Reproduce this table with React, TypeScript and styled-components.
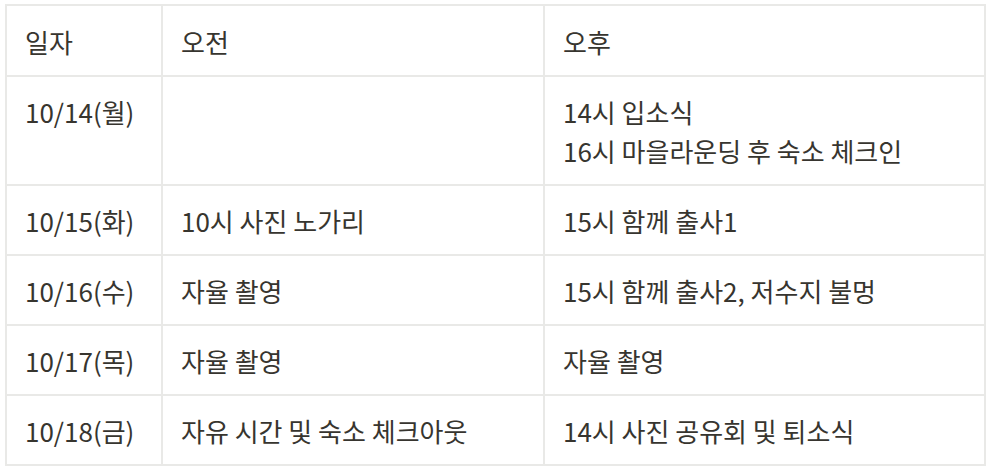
import React from 'react';
import styled, { createGlobalStyle } from 'styled-components';

const GlobalStyle = createGlobalStyle`
    html, body {
        margin: 0;
        padding: 0;
        background: #ffffff;
    }
`;

const PageWrapper = styled.div`
    padding: 4px 0 0 5px;
    font-family: 'Noto Sans CJK KR', 'Noto Sans', sans-serif;
    color: #37352f;
`;

const ScheduleTable = styled.table`
    width: 981px;
    table-layout: fixed;
    border-collapse: collapse;
    font-size: 26px;
    line-height: 39px;
`;

const Cell = styled.td`
    border: 2px solid #e9e9e7;
    padding: 15px 18px 14px;
    vertical-align: top;
    text-align: left;
    font-weight: 400;
    white-space: nowrap;
`;

const HeaderCell = styled(Cell).attrs({ as: 'th' })`
    padding-top: 16px;
`;

const Line = styled.div``;

interface ScheduleRow {
    date: string;
    morning: string[];
    afternoon: string[];
}

const rows: ScheduleRow[] = [
    { date: '10/14(월)', morning: [], afternoon: ['14시 입소식', '16시 마을라운딩 후 숙소 체크인'] },
    { date: '10/15(화)', morning: ['10시 사진 노가리'], afternoon: ['15시 함께 출사1'] },
    { date: '10/16(수)', morning: ['자율 촬영'], afternoon: ['15시 함께 출사2, 저수지 불멍'] },
    { date: '10/17(목)', morning: ['자율 촬영'], afternoon: ['자율 촬영'] },
    { date: '10/18(금)', morning: ['자유 시간 및 숙소 체크아웃'], afternoon: ['14시 사진 공유회 및 퇴소식'] },
];

const App: React.FC = () => {
    return (
        <>
            <GlobalStyle />
            <PageWrapper>
                <ScheduleTable>
                    <colgroup>
                        <col style={{ width: 156 }} />
                        <col style={{ width: 382 }} />
                        <col style={{ width: 441 }} />
                    </colgroup>
                    <thead>
                        <tr>
                            <HeaderCell>일자</HeaderCell>
                            <HeaderCell>오전</HeaderCell>
                            <HeaderCell>오후</HeaderCell>
                        </tr>
                    </thead>
                    <tbody>
                        {rows.map((row) => (
                            <tr key={row.date}>
                                <Cell>{row.date}</Cell>
                                <Cell>
                                    {row.morning.map((text) => (
                                        <Line key={text}>{text}</Line>
                                    ))}
                                </Cell>
                                <Cell>
                                    {row.afternoon.map((text) => (
                                        <Line key={text}>{text}</Line>
                                    ))}
                                </Cell>
                            </tr>
                        ))}
                    </tbody>
                </ScheduleTable>
            </PageWrapper>
        </>
    );
};

export default App;
